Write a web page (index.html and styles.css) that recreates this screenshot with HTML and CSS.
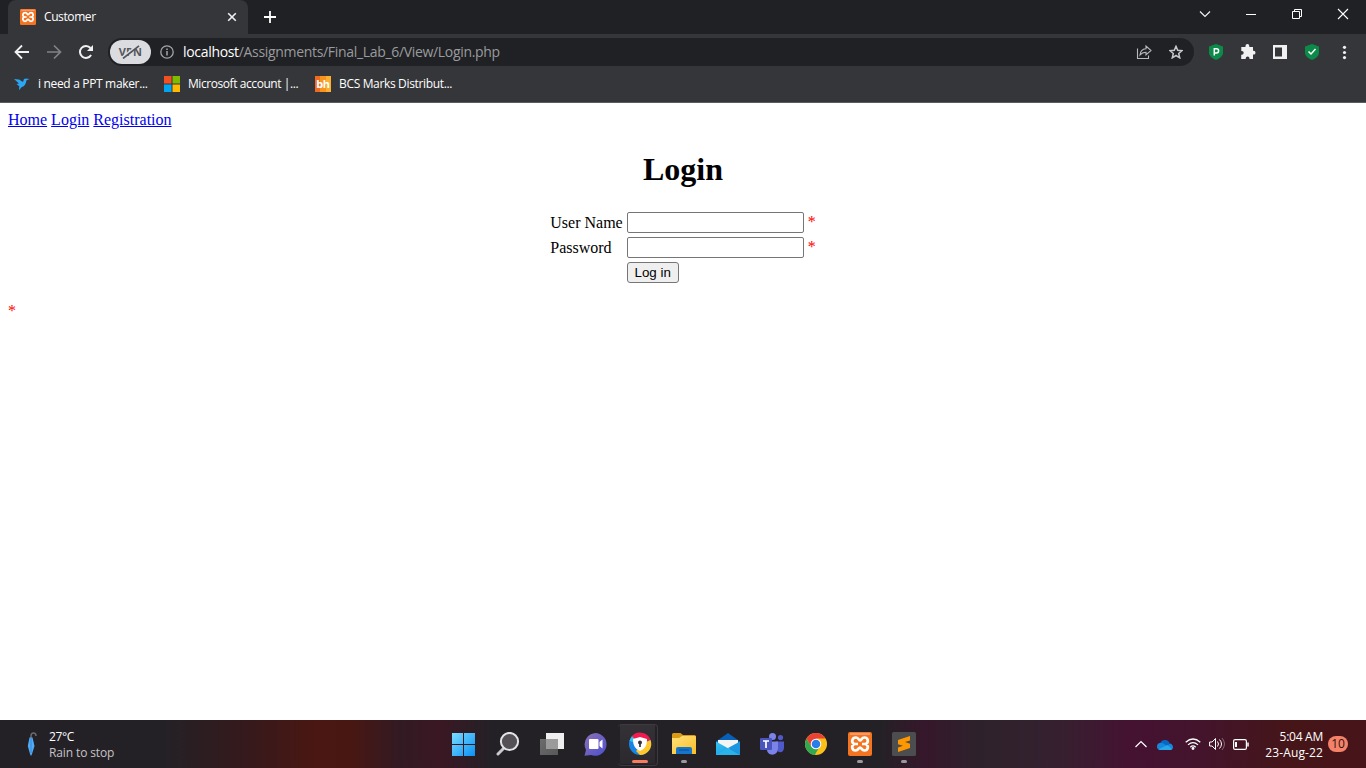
FILE: index.html
```html
<!DOCTYPE html>
<html lang="en">
<head>
<meta charset="utf-8">
<title>Customer</title>
<link rel="stylesheet" href="styles.css">
</head>
<body>
<svg class="defs" aria-hidden="true">
  <defs>
    <linearGradient id="win" x1="0" y1="0" x2="1" y2="1"><stop offset="0" stop-color="#7bdcff"/><stop offset="1" stop-color="#0a91f5"/></linearGradient>
    <linearGradient id="chat" x1="0" y1="0" x2="1" y2="1"><stop offset="0" stop-color="#8d70b5"/><stop offset="1" stop-color="#4a50cf"/></linearGradient>
    <linearGradient id="folder" x1="0" y1="0" x2="1" y2="1"><stop offset="0" stop-color="#ffe27a"/><stop offset="1" stop-color="#f9bd27"/></linearGradient>
    <linearGradient id="mail" x1="0" y1="0" x2="1" y2="1"><stop offset="0" stop-color="#35c4f3"/><stop offset="1" stop-color="#1390df"/></linearGradient>
    <linearGradient id="gray" x1="0" y1="0" x2="1" y2="1"><stop offset="0" stop-color="#6c6c6c"/><stop offset="1" stop-color="#585858"/></linearGradient>
    <symbol id="xampp" viewBox="0 0 24 24">
      <rect width="24" height="24" rx="2" fill="#f47421"/><path d="M2 1h20v2H2z" fill="#f69a70"/>
      <path d="M8 5.500c-4 0-5 4.500-2 6.500-3 2-2 6.500 1.500 6.500 3 0 3-3 4.500-3s1.500 3 4.500 3c3.500 0 4.500-4.500 1.500-6.500 3-2 2-6.500-1.500-6.500-3 0-3 3-4.500 3S11 5.500 8 5.500z" fill="none" stroke="#fff" stroke-width="2.700"/>
      <path d="M6 12h4M14 12h4" stroke="#fff" stroke-width="2.400"/>
    </symbol>
  </defs>
</svg>
<header class="chrome">
  <div class="tabstrip">
    <div class="tab">
      <svg class="favicon" viewBox="0 0 24 24"><use href="#xampp"/></svg>
      <span class="tab-title">Customer</span>
      <svg class="tab-close" viewBox="0 0 10 10"><path d="M1.200 1.200l7.600 7.600M8.800 1.200L1.200 8.800" stroke="#f1f1f1" stroke-width="1.600"/></svg>
    </div>
    <svg class="new-tab" viewBox="0 0 12 12"><path d="M6 0v12M0 6h12" stroke="#fff" stroke-width="1.800"/></svg>
    <div class="window-controls">
      <svg viewBox="0 0 46 28"><path d="M18 11.500l5 5 5-5" stroke="#f1f1f1" stroke-width="1.200"/></svg>
      <svg viewBox="0 0 46 28"><path d="M18 14.500h10" stroke="#fff"/></svg>
      <svg viewBox="0 0 46 28"><path d="M18.500 11.500h7v7h-7zM20.500 11V9.500h7v7H26" stroke="#fff"/></svg>
      <svg viewBox="0 0 46 28"><path d="M18 9l10 10M28 9L18 19" stroke="#fff" stroke-width="1.100"/></svg>
    </div>
  </div>
  <div class="toolbar">
    <div class="nav">
      <svg viewBox="0 0 16 16"><path d="M15 8H2M8 1.500L1.500 8 8 14.500" stroke="#f1f1f2" stroke-width="1.800"/></svg>
      <svg viewBox="0 0 16 16"><path d="M1 8h13M8 1.500L14.500 8 8 14.500" stroke="#818286" stroke-width="1.700"/></svg>
      <svg viewBox="0 0 16 16"><path d="M13.100 11A6 6 0 1 1 12.500 4" stroke="#f1f1f2" stroke-width="2"/><path d="M15 1v6H9z" fill="#f1f1f2"/></svg>
    </div>
    <div class="omnibox">
      <span class="vpn">VPN<svg viewBox="0 0 24 14"><path d="M4.500 12.500L20 .500" stroke="#dadce0" stroke-width="2.600"/><path d="M5 13.500L21 .800" stroke="#505257" stroke-width="1.600"/></svg></span>
      <svg class="info" viewBox="0 0 14 14"><circle cx="7" cy="7" r="6.200" stroke="#a4a6aa" stroke-width="1.300"/><path d="M7 6v4.500M7 3.400v1.500" stroke="#a4a6aa" stroke-width="1.500"/></svg>
      <span class="url"><b>localhost</b>/Assignments/Final_Lab_6/View/Login.php</span>
      <svg class="share" viewBox="0 0 16 16"><path d="M1.500 4.500v10h11v-3M4 11c.3-4.200 2-6 6-6.300V2l5 4.500-5 4.300V8.200C7 8.200 5.500 9 4 11z" stroke="#b8babd" stroke-width="1.100"/></svg>
      <svg class="star" viewBox="0 0 14 14"><path d="M7 1.300l1.700 4 4.300.4-3.300 2.800 1 4.300L7 10.500l-3.700 2.300 1-4.300L1 5.700l4.300-.4z" stroke="#c8c9cc" stroke-width="1.500"/></svg>
    </div>
    <div class="extensions">
      <svg viewBox="0 0 16 16"><path d="M8 0l7 2.500v6.300C15 12 12 14.500 8 16 4 14.500 1 12 1 8.800V2.500z" fill="#0b8a49"/><path d="M6.300 11.500V4.700h2.200a2 2 0 0 1 0 4.200H6.300" stroke="#fff" stroke-width="1.500"/></svg>
      <svg viewBox="0 0 16 16"><path d="M2 3h3.500V2a1.900 1.900 0 0 1 3.800 0v1H13v3.800h.6a1.900 1.900 0 0 1 0 3.800H13V15H9.500v-.6a1.900 1.900 0 0 0-3.800 0v.6H1.200v-4.300h.6a1.900 1.900 0 0 0 0-3.800h-.5V3z" fill="#f1f1f2"/></svg>
      <svg viewBox="0 0 16 16"><path d="M1 1h14v14H1zM3 3.500v9h7v-9z" fill="#f1f1f2" fill-rule="evenodd"/></svg>
      <svg viewBox="0 0 16 16"><path d="M8 0l7 2.500v6.300C15 12 12 14.500 8 16 4 14.500 1 12 1 8.800V2.500z" fill="#0b8a49"/><path d="M4.500 7.500l2.500 2.500 4.500-5" stroke="#fff" stroke-width="1.500"/></svg>
      <svg viewBox="0 0 16 16"><g fill="#f1f1f2"><circle cx="8.500" cy="3.300" r="1.600"/><circle cx="8.500" cy="8.500" r="1.600"/><circle cx="8.500" cy="13.600" r="1.600"/></g></svg>
    </div>
  </div>
  <nav class="bookmarks">
    <a class="bm-first"><svg viewBox="0 0 16 16"><path d="M0 3l5 .5 4 2.500 1-3 2-.6 3.500.6-3 1.200c-1 5-2.500 6-5 7L5 14.300l.3-4L2.500 8 5 7.500z" fill="#29a8f5"/></svg><span class="bm-ppt">i need a PPT maker...</span></a>
    <a class="bm-second"><svg viewBox="0 0 16 16"><path d="M0 0h7.500v7.500H0z" fill="#f25022"/><path d="M8.500 0H16v7.500H8.500z" fill="#7fba00"/><path d="M0 8.500h7.500V16H0z" fill="#00a4ef"/><path d="M8.500 8.500H16V16H8.500z" fill="#ffb900"/></svg><span class="bm-ms">Microsoft account |...</span></a>
    <a class="bm-third"><span class="bh">bh</span><span class="bm-bcs">BCS Marks Distribut...</span></a>
  </nav>
</header>
<main class="page">
  <a href="#">Home</a> <a href="#">Login</a> <a href="#">Registration</a>
  <h1>Login</h1>
  <form>
    <table class="login">
      <tr><td>User Name</td><td><input class="field" type="text"> <span class="required">*</span></td></tr>
      <tr><td>Password</td><td><input class="field" type="password"> <span class="required">*</span></td></tr>
      <tr><td></td><td><button class="submit" type="button">Log in</button></td></tr>
    </table>
  </form>
  <p class="required message">*</p>
</main>
<footer class="taskbar">
  <div class="weather">
    <svg viewBox="0 0 10 24"><path d="M4 6V4c0-4 5-4 5 0" stroke="#69686d" stroke-width="1.500"/><path d="M2.500 5.500h3L7.500 14 5 22 4 24 3 22 .800 14z" fill="#51aaf5"/><path d="M4 6v15" stroke="#318bd8"/></svg>
    <div><div class="temp">27°C</div><div class="forecast">Rain to stop</div></div>
  </div>
  <div class="apps">
    <span class="app"><svg viewBox="0 0 24 24"><path d="M0 1h11v11H0zM12 1h11v11H12zM0 13h11v11H0zM12 13h11v11H12z" fill="url(#win)"/></svg></span>
    <span class="app"><svg viewBox="0 0 24 24"><path d="M7 17l-5 5" stroke="#c8c9cc" stroke-width="3" stroke-linecap="round"/><circle cx="13.500" cy="9.500" r="8.600" fill="#555055" stroke="#e1e3e5" stroke-width="2"/></svg></span>
    <span class="app"><svg viewBox="0 0 24 24"><path d="M6 1h18v16H6z" fill="#eee"/><path d="M0 7h18v16H0z" fill="url(#gray)"/><path d="M6 7h12v10H6z" fill="#9b9b9b"/></svg></span>
    <span class="app"><svg viewBox="0 0 24 24"><path d="M12 1a11.400 11.400 0 1 1-5 22L.500 23.700 2 18A11.500 11.500 0 0 1 12 1z" fill="url(#chat)"/><rect x="5" y="7" width="9.500" height="10" rx="1" fill="#fff"/><path d="M15.500 10l3-2.500v9l-3-2.500z" fill="#fff"/></svg></span>
    <span class="app active"><svg viewBox="0 0 24 24"><circle cx="12" cy="12" r="11" fill="#1685e5"/><path d="M3 5.500A11 11 0 0 1 22.500 8L12 12z" fill="#f21b4f"/><path d="M22.500 8A11 11 0 0 1 12 23l-4-4 8-8z" fill="#ffc82a"/><path d="M1.500 9A11 11 0 0 1 4 4.200L12 12z" fill="#31c2ed"/><path d="M12 5l7 2c0 6-1.500 9.500-7 12-5.500-2.500-7-6-7-12z" fill="#fff"/><circle cx="12" cy="10.500" r="2" fill="#343338"/><path d="M12 10v5" stroke="#343338" stroke-width="1.700"/></svg></span>
    <span class="app running"><svg viewBox="0 0 24 24"><path d="M0 2.500Q0 1 1.500 1h7L11 3h11.500Q24 3 24 5v4H0z" fill="#d99a15"/><path d="M0 6h7l3-2h13q1 0 1 1v17H0z" fill="url(#folder)"/><path d="M4 22v-5q0-2 2-2h12q2 0 2 2v5z" fill="#1675c9"/><path d="M7 18h10" stroke="#084c93"/></svg></span>
    <span class="app"><svg viewBox="0 0 24 24"><path d="M0 9.500L12 1l12 8.500V23H0z" fill="#075fb6"/><path d="M2 8h20v9H2z" fill="#f4f4f5"/><path d="M0 9.500L24 23H0z" fill="url(#mail)"/><path d="M24 9.500V23L12 16z" fill="#1c96df"/><path d="M0 23h24L12 16z" fill="#28b3ed"/></svg></span>
    <span class="app"><svg viewBox="0 0 24 24"><circle cx="12.500" cy="4.500" r="3.500" fill="#7b83eb"/><circle cx="20.500" cy="5.600" r="2.600" fill="#5059c9"/><path d="M16 9.500h8v6c0 4-3 6-6 4z" fill="#5059c9"/><path d="M7 9.500h11v7c0 8-11 8-11 1z" fill="#7b83eb"/><rect y="6" width="12" height="12" rx="1" fill="#4b53bc"/><path d="M3 9h6M6 9v7" stroke="#fff" stroke-width="1.700"/></svg></span>
    <span class="app"><svg viewBox="0 0 24 24"><circle cx="12" cy="12" r="11" fill="#fbc116"/><path d="M2.500 6.500A11 11 0 0 1 21.500 6.500H12L7 14.500z" fill="#ea4335"/><path d="M2.500 6.500l4.700 8.300L12 17.500l-1 5.500A11 11 0 0 1 2.500 6.500z" fill="#31a852"/><path d="M10.500 23L16 14.500l-6 1z" fill="#31a852"/><circle cx="12" cy="12" r="5.300" fill="#fff"/><circle cx="12" cy="12" r="4.300" fill="#2b7de9"/></svg></span>
    <span class="app running"><svg viewBox="0 0 24 24"><use href="#xampp"/></svg></span>
    <span class="app running"><svg viewBox="0 0 24 24"><rect width="24" height="24" rx="1.500" fill="#4c4d4f"/><path d="M18 4L6 8v4.200l5 1.500-5 1.800V20l12-4v-4.300L13 10l5-1.600z" fill="#ff9800"/></svg></span>
  </div>
  <div class="tray">
    <svg class="caret" viewBox="0 0 12 8"><path d="M.500 7L6 1.500 11.500 7" stroke="#fff" stroke-width="1.200"/></svg>
    <svg class="cloud" viewBox="0 0 16 11"><path d="M3 5a5 5 0 0 1 9.500-1L14 8 3 8z" fill="#0867c5"/><path d="M3 11a3.500 3.500 0 0 1 1-7c3 0 4 2 6 3l3-2.500c4 1 4 6.500 0 6.500z" fill="#1688dc"/><path d="M1.500 10.300L10.500 6l4.500 4q-1 1-2 1H3z" fill="#28a8ea"/></svg>
    <svg class="wifi" viewBox="0 0 16 12"><path d="M.700 4.300q7.300-6.600 14.600 0M3 6.900q5-4.600 10 0M5.300 9.200q2.700-2.500 5.400 0" stroke="#fff" stroke-width="1.200"/><circle cx="8" cy="10.500" r="1.400" fill="#fff"/></svg>
    <svg class="volume" viewBox="0 0 16 14"><path d="M.600 5h2.500L6.500 1.500v11L3.100 9H.600z" stroke="#fff"/><path d="M8.500 4.500q2 2.500 0 5M10.500 2.500q4 4.500 0 9" stroke="#fff"/><path d="M13 1q5 6 0 12" stroke="#83676d"/></svg>
    <svg class="battery" viewBox="0 0 16 11"><rect x=".6" y=".6" width="12.800" height="9.800" rx="1.500" stroke="#fff" stroke-width="1.200"/><path d="M3 3v5" stroke="#fff" stroke-width="2"/><path d="M15 3.500v4" stroke="#fff" stroke-width="1.500"/></svg>
    <div class="clock"><div>5:04 AM</div><div class="date">23-Aug-22</div></div>
    <span class="notifications">10</span>
  </div>
</footer>
</body>
</html>
```
FILE: styles.css
```css
* { box-sizing: border-box; }
body { margin: 0; width: 1366px; height: 768px; overflow: hidden; display: flex; flex-direction: column; background: #fff; }
svg { display: block; flex: none; fill: none; }
.defs { position: absolute; width: 0; height: 0; }
.chrome, .taskbar { font-family: "Open Sans", "Noto Sans", sans-serif; font-size: 12px; color: #fff; flex: none; }
.chrome { height: 103px; background: #35363a; border-bottom: 1px solid #5b5c60; }
.tabstrip { height: 34px; background: #202124; display: flex; padding-left: 8px; }
.tab { width: 240px; height: 34px; display: flex; align-items: center; padding: 0 11px 0 12px; background: #35363a; border-radius: 8px 8px 0 0; }
.favicon { width: 16px; height: 16px; }
.tab-title { margin-left: 8px; padding-bottom: 1px; letter-spacing: -.4px; flex: 1; white-space: nowrap; }
.tab-close { width: 10px; height: 10px; }
.new-tab { width: 12px; height: 12px; margin: 11px 0 0 16px; }
.window-controls { display: flex; margin-left: auto; }
.window-controls svg { width: 46px; height: 28px; }
.toolbar { height: 36px; display: flex; align-items: center; padding-left: 14px; }
.nav { display: flex; gap: 16px; width: 94px; }
.nav svg { width: 16px; height: 16px; }
.omnibox { width: 1086px; height: 28px; border-radius: 14px; background: #202124; display: flex; align-items: center; padding: 0 11px 0 2px; }
.vpn { position: relative; width: 41px; height: 24px; border-radius: 12px; background: #dadce0; color: #55575c; font-size: 11px; line-height: 24px; text-align: center; font-weight: 700; letter-spacing: .1px; }
.vpn svg { position: absolute; left: 8px; top: 5px; width: 24px; height: 14px; }
.info { width: 14px; height: 14px; margin-left: 9px; }
.url { margin-left: 9px; padding-bottom: 1px; font-size: 14px; letter-spacing: -.32px; color: #9a9b9e; flex: 1; white-space: nowrap; }
.url b { font-weight: 400; color: #fff; }
.share { width: 16px; height: 16px; margin-right: 17px; }
.star { width: 14px; height: 14px; }
.extensions { display: flex; gap: 16px; margin-left: 14px; }
.extensions svg { width: 16px; height: 16px; }
.bookmarks { display: flex; height: 28px; align-items: center; padding-left: 14px; }
.bookmarks a { display: flex; align-items: center; white-space: nowrap; }
.bookmarks svg, .bh { width: 16px; height: 16px; margin-right: 8px; }
.bm-first { width: 150px; }
.bm-second { width: 151px; }
.bm-ppt, .bm-ms, .bm-bcs { padding-bottom: 1px; }
.bm-ppt { letter-spacing: -.33px; }
.bm-ms { letter-spacing: -.43px; }
.bm-bcs { letter-spacing: -.34px; }
.bh { background: linear-gradient(90deg, #f06b22 33%, #f7941e 33% 66%, #fbb034 66%); font-size: 11px; line-height: 15px; font-weight: 700; text-align: center; letter-spacing: -.4px; }
.page { flex: 1; padding: 8px; font: 16px "Liberation Serif", serif; color: #000; }
.page a { color: #0000ee; }
.page h1 { margin: 21px 0; font-size: 32px; line-height: 38px; text-align: center; }
.page form { margin: 0 0 16px; }
.login { margin: 0 auto; border-spacing: 2px; }
.login td { padding: 1px; }
.field { width: 177px; height: 21px; padding: 1px 2px; border: 1px solid #767676; border-radius: 2px; font: 13.333px "Liberation Sans", sans-serif; }
.submit { width: 52px; height: 21px; padding: 1px 6px; border: 1px solid #767676; border-radius: 3px; background: #efefef; color: #000; font: 13.333px "Liberation Sans", sans-serif; }
.required { color: red; }
.message { margin: 0; }
.taskbar { height: 48px; display: flex; align-items: center; background: linear-gradient(90deg, #242126 0, #242126 165px, #35191c 245px, #4a1712 315px, #491712 350px, #321a23 400px, #3a1723 440px, #242126 490px, #242126 880px, #36172b 925px, #2d222c 980px, #36202f 1060px, #451232 1130px, #43142c 1200px, #451518 1290px, #471419 1366px); }
.weather { width: 442px; display: flex; padding-left: 27px; line-height: 16px; }
.weather svg { width: 10px; height: 24px; margin: 4px 12px 0 0; }
.temp { padding-top: 1px; letter-spacing: -.4px; }
.forecast { color: #c6c4c7; letter-spacing: -.12px; }
.apps { display: flex; width: 484px; }
.app { position: relative; width: 44px; height: 40px; display: flex; align-items: center; justify-content: center; }
.app svg { width: 24px; height: 24px; }
.active { background: linear-gradient(#343237, #2b292e) 2px 0 / 35px 40px no-repeat; border-radius: 4px; }
.active::before { content: ""; position: absolute; left: 0; top: 0; width: 39px; height: 40px; border: 1px solid #3c3a3f; border-left-width: 0; border-radius: 4px; }
.running::after, .active::after { content: ""; position: absolute; left: 19px; bottom: 1px; width: 6px; height: 3px; border-radius: 2px; background: #9b999c; }
.active::after { left: 14px; width: 16px; background: #f87c5e; }
.tray { flex: 1; display: flex; align-items: center; padding: 0 18px 0 209px; }
.caret { width: 12px; height: 8px; margin-right: 10px; }
.cloud { width: 16px; height: 11px; margin-right: 12px; }
.wifi { width: 16px; height: 12px; margin-right: 8px; }
.volume { width: 16px; height: 14px; margin-right: 8px; }
.battery { width: 16px; height: 11px; }
.clock { flex: 1; line-height: 16px; text-align: right; letter-spacing: -.25px; white-space: nowrap; padding-top: 1px; }
.date { letter-spacing: .12px; }
.notifications { width: 20px; height: 16px; margin-left: 5px; border-radius: 8px; background: #f58268; color: #281512; line-height: 16px; text-align: center; }
```
